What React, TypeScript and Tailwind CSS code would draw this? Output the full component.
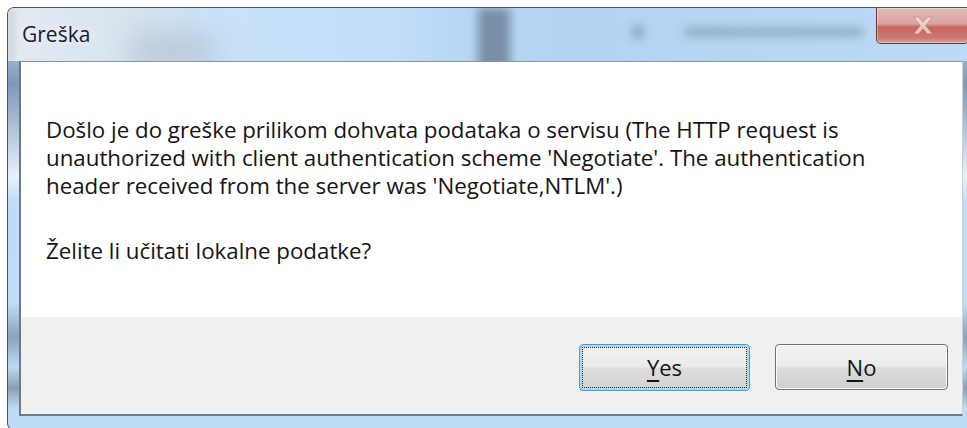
import React from 'react';

// Aero-style message box: "Greška" with Yes / No
function CloseButton() {
  return (
    <div className="absolute right-[-2px] top-0 h-[36px] w-[93px] rounded-b-[5px] border border-t-0 border-[#6e3434] bg-[linear-gradient(to_bottom,#e2b9b7_0%,#d9a4a1_45%,#c8645d_55%,#c97a72_85%,#d8a19b_100%)] shadow-[inset_0_0_0_1px_rgba(255,255,255,0.35)] flex items-center justify-center">
      <svg width="24" height="19" viewBox="0 0 22 18" className="opacity-75">
        <path
          d="M2 1 H7 L11 6 L15 1 H20 L13.5 9 L20 17 H15 L11 12 L7 17 H2 L8.5 9 Z"
          fill="#f6e4e2"
          stroke="#b86a66"
          strokeWidth="0.6"
        />
      </svg>
    </div>
  );
}

function TitleBar() {
  return (
    <div className="relative h-[53px] shrink-0 overflow-hidden rounded-tl-[6px] bg-[linear-gradient(to_right,#e3eaf1_0%,#d6e3ee_14%,#c9e2f9_22%,#c2defa_40%,#b6d5f4_48%,#b3d3f3_60%,#b7d6f4_80%,#bcdaf6_100%)]">
      {/* blurred shapes seen through the glass */}
      <div className="absolute left-[120px] top-[24px] h-[40px] w-[90px] rounded-full bg-[#aebccb] blur-[14px] opacity-60" />
      <div className="absolute left-[470px] top-0 h-[60px] w-[32px] bg-[#7a8ea6] blur-[5px]" />
      <div className="absolute left-[624px] top-[17px] h-[14px] w-[12px] rounded bg-[#8396ab] blur-[4px] opacity-70" />
      <div className="absolute left-[676px] top-[19px] h-[10px] w-[180px] rounded bg-[#8a9cb0] blur-[5px] opacity-70" />
      <div className="absolute left-0 top-0 h-full w-[6px] bg-[#c7d3de] blur-[3px]" />
      <div className="relative pl-[14px] pt-[11px] text-[21px] leading-[30px] text-[#1b1b2b] [text-shadow:0_0_8px_rgba(255,255,255,0.9)]">
        Greška
      </div>
      <CloseButton />
    </div>
  );
}

export default function App() {
  return (
    <div className="h-[428px] w-[967px] overflow-hidden bg-white pl-[7px] pt-[7px] font-['Open_Sans','Noto_Sans',sans-serif]">
      <div className="flex h-[424px] w-[960px] flex-col rounded-tl-[7px] rounded-bl-[8px] border-l border-t border-b border-[#4a5563] bg-[linear-gradient(to_bottom,#cfe3f5_0%,#7f97bb_18%,#e7f1fb_40%,#bddcf8_46%,#bfdcf7_70%,#8aa2ba_78%,#bddbf7_85%,#8b9fb3_90%,#bedcf8_95%,#bddcf8_100%)]">
        <TitleBar />
        <div className="ml-[11px] mr-[4px] flex h-[355px] flex-col border-l-2 border-t border-b-2 border-r border-l-[#6c7986] border-t-[#8395a8] border-b-[#6f7b87] border-r-[#c7d2dc] bg-white">
          <div className="h-[255px] pl-[25px] pt-[54px] text-[22.3px] leading-[28px] text-[#141414]">
            <p>
              Došlo je do greške prilikom dohvata podataka o servisu (The HTTP request is
              <br />
              unauthorized with client authentication scheme 'Negotiate'. The authentication
              <br />
              header received from the server was 'Negotiate,NTLM'.)
            </p>
            <p className="mt-[37px]">Želite li učitati lokalne podatke?</p>
          </div>
          <div className="flex flex-1 items-start justify-end gap-[25px] bg-[#f0f0f0] pr-[14px] pt-[27px]">
            <button className="flex h-[47px] w-[171px] items-center justify-center rounded-[4px] border border-[#3c9fdc] bg-[linear-gradient(to_bottom,#f3f3f3_0%,#ebebeb_48%,#dddddd_52%,#d2d2d2_100%)] p-[2px] shadow-[inset_0_0_0_2px_#a6dcf8] text-[22px] text-[#141414]">
              <span className="flex h-full w-full items-center justify-center border border-dotted border-[#222]">
                <span className="underline underline-offset-[4px] decoration-[1.5px]">Y</span>es
              </span>
            </button>
            <button className="flex h-[46px] w-[173px] items-center justify-center rounded-[4px] border border-[#707070] bg-[linear-gradient(to_bottom,#f2f2f2_0%,#ebebeb_48%,#dddddd_52%,#cfcfcf_100%)] shadow-[inset_0_0_0_1px_#fbfbfb] text-[22px] text-[#141414]">
              <span>
                <span className="underline underline-offset-[4px] decoration-[1.5px]">N</span>o
              </span>
            </button>
          </div>
        </div>
      </div>
    </div>
  );
}
